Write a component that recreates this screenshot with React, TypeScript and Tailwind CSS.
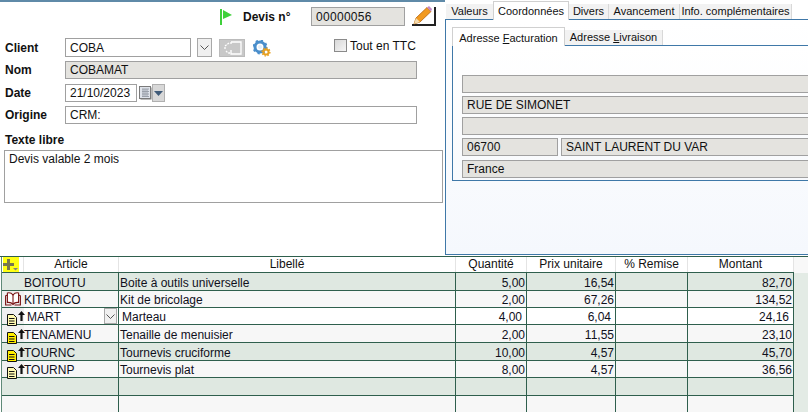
const sans = "font-['Liberation_Sans',Arial,sans-serif]";
const tabFont = "font-['Liberation_Sans',Arial,sans-serif] text-[11px] whitespace-nowrap";

type Row = {
  article: string;
  libelle: string;
  qte: string;
  prix: string;
  montant: string;
  icon?: "book" | "doc" | "docPale";
  bg: string;
  h: string;
  edit?: boolean;
};

const rows: Row[] = [
  { article: "BOITOUTU", libelle: "Boite à outils universelle", qte: "5,00", prix: "16,54", montant: "82,70", bg: "bg-[#dfe8e1]", h: "h-[18px]" },
  { article: "KITBRICO", libelle: "Kit de bricolage", qte: "2,00", prix: "67,26", montant: "134,52", icon: "book", bg: "bg-[#f7f7f7]", h: "h-[17px]" },
  { article: "MART", libelle: "Marteau", qte: "4,00", prix: "6,04", montant: "24,16", icon: "docPale", bg: "bg-white", h: "h-[17px]", edit: true },
  { article: "TENAMENU", libelle: "Tenaille de menuisier", qte: "2,00", prix: "11,55", montant: "23,10", icon: "doc", bg: "bg-[#f7f7f7]", h: "h-[18px]" },
  { article: "TOURNC", libelle: "Tournevis cruciforme", qte: "10,00", prix: "4,57", montant: "45,70", icon: "doc", bg: "bg-[#dfe8e1]", h: "h-[18px]" },
  { article: "TOURNP", libelle: "Tournevis plat", qte: "8,00", prix: "4,57", montant: "36,56", icon: "docPale", bg: "bg-[#f7f7f7]", h: "h-[17px]" },
  { article: "", libelle: "", qte: "", prix: "", montant: "", bg: "bg-[#dfe8e1]", h: "h-[18px]" },
  { article: "", libelle: "", qte: "", prix: "", montant: "", bg: "bg-[#f7f7f7]", h: "h-[18px]" },
];

function Field({ className, children }: { className: string; children?: React.ReactNode }) {
  return (
    <div className={`flex items-center border border-[#a0a0a0] pl-[4px] leading-none whitespace-nowrap overflow-hidden ${className}`}>
      {children}
    </div>
  );
}

function Label({ children }: { children: React.ReactNode }) {
  return <div className="w-[65px] pl-[5px] text-[12px] font-bold text-[#111]">{children}</div>;
}

function ChevronBtn({ className }: { className: string }) {
  return (
    <div className={`flex items-center justify-center border border-[#a8a8a8] bg-[#f0f0f0] ${className}`}>
      <svg width="9" height="5" viewBox="0 0 9 5" fill="none" stroke="#555" strokeWidth="1">
        <path d="M0.5 0.5 L4.5 4.5 L8.5 0.5" />
      </svg>
    </div>
  );
}

function GearIcon() {
  return (
    <svg width="18" height="17" viewBox="0 0 18 17" className="ml-[8px] mt-[1px]">
      <circle cx="7" cy="7" r="5" fill="none" stroke="#4a8ecb" strokeWidth="3" />
      <circle cx="7" cy="7" r="6.5" fill="none" stroke="#4a8ecb" strokeWidth="2" strokeDasharray="2.2 2.9" />
      <circle cx="7" cy="7" r="2" fill="#e4eff9" />
      <circle cx="13" cy="12" r="2.6" fill="none" stroke="#e8a020" strokeWidth="2" />
      <circle cx="13" cy="12" r="3.9" fill="none" stroke="#e8a020" strokeWidth="1.4" strokeDasharray="1.5 1.5" />
      <circle cx="13" cy="12" r="1" fill="#fff" />
    </svg>
  );
}

function DocIcon({ pale }: { pale?: boolean }) {
  return (
    <svg width="10" height="12" viewBox="0 0 10 12">
      <path d="M0.5 0.5 H6.5 L9.5 3.5 V11.5 H0.5 Z" fill={pale ? "#fff9b0" : "#ffee00"} stroke="#111" />
      <path d="M2 4.5 H7.5 M2 7 H7.5 M2 9.5 H7.5" stroke="#111" strokeWidth="1" />
    </svg>
  );
}

function ArrowUp() {
  return (
    <svg width="7" height="10" viewBox="0 0 7 10">
      <path d="M3.5 0 L7 4 H4.6 V10 H2.4 V4 H0 Z" fill="#111" />
    </svg>
  );
}

function BookIcon() {
  return (
    <svg width="16" height="14" viewBox="0 0 16 14" fill="#fff" stroke="#7a1414" strokeWidth="1.1">
      <path d="M8 3 C6.5 1 4 0.6 2.4 1 V10.5 C4 10.2 6.5 10.6 8 12.4 C9.5 10.6 12 10.2 13.6 10.5 V1 C12 0.6 9.5 1 8 3 Z" />
      <path d="M8 3 V12.4 M2.4 3 L0.6 3.8 V13 H6.5 M13.6 3 L15.4 3.8 V13 H9.5" fill="none" />
    </svg>
  );
}

function GridRow({ row, last }: { row: Row; last: boolean }) {
  const line = "border-r border-[#2f5f4d]";
  const pad = row.edit ? "pr-[4px]" : "pr-[1px]";
  return (
    <div className={`flex ${row.h} ${row.bg} ${last ? "" : "border-b border-[#2f5f4d]"} text-[12px] leading-none text-[#10101c]`}>
      <div className={`flex w-[117px] shrink-0 ${line}`}>
        <div className={`flex w-[22px] shrink-0 items-end ${row.bg === "bg-[#dfe8e1]" || !row.icon ? "" : "bg-[#f0f0f0]"}`}>
          {row.icon === "book" && (
            <div className="mb-[1px] ml-[3px]">
              <BookIcon />
            </div>
          )}
          {(row.icon === "doc" || row.icon === "docPale") && (
            <div className="flex items-end">
              <div className="relative z-10 -mb-[2px] ml-[5px]">
                <DocIcon pale={row.icon === "docPale"} />
              </div>
              <div className="mb-[3px] ml-[1px] shrink-0">
                <ArrowUp />
              </div>
            </div>
          )}
        </div>
        <div className={`flex flex-1 items-center pt-[2px] ${row.edit ? "pl-[3px]" : ""}`}>
          {row.article}
          {row.edit && <ChevronBtn className="-mt-[2px] ml-auto mr-[1px] h-[16px] w-[13px]" />}
        </div>
      </div>
      <div className={`flex w-[337px] shrink-0 items-center pt-[2px] ${row.edit ? "pl-[3px]" : "pl-[1px]"} ${line}`}>{row.libelle}</div>
      <div className={`flex w-[71px] shrink-0 items-center justify-end pt-[2px] ${pad} ${line}`}>{row.qte}</div>
      <div className={`flex w-[89px] shrink-0 items-center justify-end pt-[2px] ${pad} ${line}`}>{row.prix}</div>
      <div className={`w-[72px] shrink-0 ${line}`} />
      <div className={`flex w-[106px] shrink-0 items-center justify-end pt-[2px] ${pad} ${line}`}>{row.montant}</div>
    </div>
  );
}

export default function App() {
  return (
    <div className={`h-[412px] w-[808px] overflow-hidden bg-white ${sans}`}>
      <div className="flex h-[256px]">
        {/* formulaire */}
        <div className="w-[445px] shrink-0 border-t-2 border-[#5f8aa8] text-[12px] text-[#111]">
          <div className="mt-[5px] flex h-[19px] items-center">
            <svg width="12" height="16" viewBox="0 0 12 16" className="ml-[220px]">
              <rect x="0" y="0" width="2" height="16" fill="#3fd03a" />
              <path d="M3 1 L12 6 L3 10 Z" fill="#3fd03a" />
            </svg>
            <div className="ml-[11px] w-[68px] font-bold">Devis n°</div>
            <Field className="h-[19px] w-[94px] bg-[#e4e3df] tracking-[0.3px]">00000056</Field>
            <div className="ml-[7px] flex h-[19px] w-[24px] items-center justify-center border-b-2 border-r-2 border-[#222]">
              <svg width="20" height="19" viewBox="0 0 20 19">
                <path d="M1 18 L3 12 L14 1.5 L18 5.5 L7 16 Z" fill="#f29a1f" stroke="#b5650d" strokeWidth="0.8" />
                <path d="M1 18 L3 12 L7 16 Z" fill="#f5dcb0" />
                <path d="M14 1.5 L16 0 L19 3 L18 5.5 Z" fill="#c48ac8" />
              </svg>
            </div>
          </div>

          <div className="mt-[12px] flex h-[19px] items-center">
            <Label>Client</Label>
            <Field className="h-[19px] w-[126px]">COBA</Field>
            <ChevronBtn className="ml-[6px] h-[19px] w-[15px]" />
            <div className="ml-[7px] flex h-[18px] w-[26px] items-center justify-center border border-[#bbb] bg-[#c8c8c8]">
              <svg width="20" height="14" viewBox="0 0 20 14" fill="none" stroke="#fff" strokeWidth="1.3">
                <path d="M9 1 H19 V13 H9 V9 M9 1 V3" />
                <path d="M7 2 L3 5 V8 M4 10 L6 12 L8 12" strokeDasharray="2 1" />
              </svg>
            </div>
            <GearIcon />
            <div className="mb-[4px] ml-[63px] flex items-center">
              <div className="h-[13px] w-[13px] border border-[#8a8a8a] bg-gradient-to-br from-[#d8d8d8] to-[#f6f6f6]" />
              <span className="ml-[3px] whitespace-nowrap">Tout en TTC</span>
            </div>
          </div>

          <div className="mt-[4px] flex items-center">
            <Label>Nom</Label>
            <Field className="h-[18px] w-[352px] bg-[#e4e3df]">COBAMAT</Field>
          </div>

          <div className="mt-[5px] flex items-center">
            <Label>Date</Label>
            <Field className="h-[18px] w-[72px]">21/10/2023</Field>
            <svg width="13" height="14" viewBox="0 0 13 14" className="ml-[2px]">
              <rect x="1.5" y="1.5" width="11" height="12" fill="#777" />
              <rect x="0.5" y="0.5" width="11" height="12" fill="#dfe3ea" stroke="#7a7a7a" />
              <path d="M3 3 H10 M3 5.5 H10 M3 8 H10 M3 10.5 H10 M4 3 V11 M6 3 V11 M8 3 V11" stroke="#9aa0aa" strokeWidth="1" />
            </svg>
            <div className="flex h-[18px] w-[13px] items-center justify-center border border-[#b0b0b0] bg-[#d8d8d8]">
              <svg width="9" height="5" viewBox="0 0 9 5">
                <path d="M0 0 H9 L4.5 5 Z" fill="#3f5a78" />
              </svg>
            </div>
          </div>

          <div className="mt-[4px] flex items-center">
            <Label>Origine</Label>
            <Field className="h-[18px] w-[352px]">CRM:</Field>
          </div>

          <div className="mt-[9px] h-[14px] pl-[5px] font-bold leading-[14px]">Texte libre</div>
          <div className="ml-[4px] mt-[3px] h-[53px] w-[439px] border border-[#a0a0a0] pl-[4px] pt-[1px] leading-[14px]">
            Devis valable 2 mois
          </div>
        </div>

        {/* onglets */}
        <div className="flex min-w-0 flex-1 flex-col">
          <div className={`mt-[1px] flex h-[18px] items-end pl-[1px] text-[#111] ${tabFont}`}>
            <div className="flex h-[15px] w-[47px] items-center justify-center bg-[#f2f2f2]">Valeurs</div>
            <div className="relative -mb-px flex h-[19px] w-[76px] items-start justify-center border-x border-t border-[#d0d0d0] bg-white pt-[1px]">Coordonnées</div>
            <div className="flex h-[15px] w-[40px] items-center justify-center border-r border-[#d8d8d8] bg-[#f2f2f2]">Divers</div>
            <div className="flex h-[15px] w-[71px] items-center justify-center border-r border-[#d8d8d8] bg-[#f2f2f2]">Avancement</div>
            <div className="flex h-[15px] w-[112px] items-center justify-center border-r border-[#d8d8d8] bg-[#f2f2f2]">Info. complémentaires</div>
          </div>
          <div className="flex h-[236px] flex-col border-b border-l border-t border-[#3f78a8] bg-gradient-to-b from-white to-[#f5f8fd] pl-[6px]">
            <div className={`mt-[7px] flex h-[18px] items-end text-[#111] ${tabFont}`}>
              <div className="relative -mb-px flex h-[19px] w-[113px] items-start justify-center border-x border-t border-[#d0d0d0] bg-white pt-[2px]">
                <span>
                  Adresse <u>F</u>acturation
                </span>
              </div>
              <div className="flex h-[15px] w-[98px] items-center justify-center border-r border-[#d8d8d8] bg-[#f2f2f2]">
                <span>
                  Adresse <u>L</u>ivraison
                </span>
              </div>
            </div>
            <div className="flex h-[136px] flex-col border-b border-l border-t border-[#3f78a8] bg-gradient-to-b from-white to-[#f8fafd] pl-[9px] pt-[29px] text-[12px] text-[#111]">
              <Field className="h-[18px] border-r-0 bg-[#e4e3df]" />
              <Field className="mt-[3px] h-[18px] border-r-0 bg-[#e4e3df]">RUE DE SIMONET</Field>
              <Field className="mt-[3px] h-[18px] border-r-0 bg-[#e4e3df]" />
              <div className="mt-[3px] flex">
                <Field className="h-[18px] w-[96px] bg-[#e4e3df]">06700</Field>
                <Field className="ml-[3px] h-[18px] flex-1 border-r-0 bg-[#e4e3df]">SAINT LAURENT DU VAR</Field>
              </div>
              <Field className="mt-[4px] h-[18px] border-r-0 bg-[#e4e3df]">France</Field>
            </div>
          </div>
        </div>
      </div>

      {/* lignes du devis */}
      <div className="flex h-[156px] border-t border-[#2f5f4d]">
        <div className="ml-px w-[793px] shrink-0 border-l border-[#5f8a78]">
          <div className="flex h-[16px] border-b border-[#2f5f4d] bg-white text-center text-[12px] leading-[15px] text-[#111]">
            <div className="flex w-[22px] shrink-0 items-center border-r border-[#e4e4e4] pl-[1px]">
              <div className="flex h-[15px] w-[16px] items-start bg-[#ffff14]">
                <svg width="16" height="15" viewBox="0 0 16 15">
                  <path d="M4 2 H7 V6 H11 V9 H7 V13 H4 V9 H0 V6 H4 Z" fill="#77774f" />
                  <path d="M10 11 H15 L12.5 13.5 Z" fill="#808080" />
                </svg>
              </div>
            </div>
            <div className="w-[95px] shrink-0 border-r border-[#e4e4e4]">Article</div>
            <div className="w-[337px] shrink-0 border-r border-[#e4e4e4]">Libellé</div>
            <div className="w-[71px] shrink-0 border-r border-[#e4e4e4]">Quantité</div>
            <div className="w-[89px] shrink-0 border-r border-[#e4e4e4]">Prix unitaire</div>
            <div className="w-[72px] shrink-0 border-r border-[#e4e4e4]">% Remise</div>
            <div className="w-[106px] shrink-0 border-r border-[#e4e4e4]">Montant</div>
          </div>
          {rows.map((row, i) => (
            <GridRow key={i} row={row} last={i === rows.length - 1} />
          ))}
        </div>
        <div className="flex flex-1 flex-col">
          <div className="h-[16px] bg-[#f8f8f8]" />
          <div className="flex-1 bg-[#e3ebe5]" />
        </div>
      </div>
    </div>
  );
}
